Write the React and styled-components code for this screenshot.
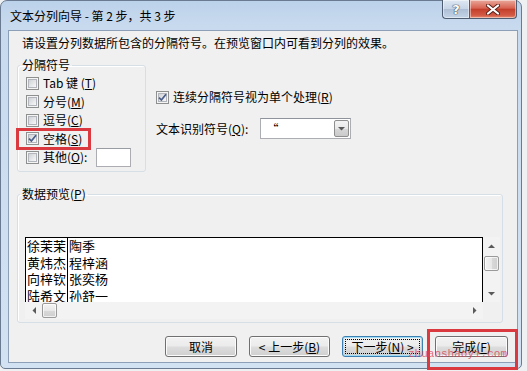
import React from "react";
import styled, { createGlobalStyle } from "styled-components";

const Global = createGlobalStyle`
  html, body { margin: 0; padding: 0; background: #eef0f2; }
  body {
    width: 527px; height: 371px; overflow: hidden;
    font-family: "Noto Sans CJK SC", "Noto Sans", sans-serif;
    font-size: 12px; color: #000;
  }
  u { text-decoration: underline; text-underline-offset: 1px; }
`;

const Window = styled.div`
  position: relative;
  width: 522px;
  height: 369px;
  box-sizing: border-box;
  border: 1px solid #6a7a90;
  border-radius: 7px 7px 5px 5px;
  background: linear-gradient(180deg, #bcd2ea 0px, #c8daee 26px, #d2e2f3 100%);
  display: flex;
  flex-direction: column;
`;

const TitleBar = styled.div`
  height: 29px;
  display: flex;
  align-items: flex-start;
  flex: none;
`;

const Title = styled.div`
  padding-left: 9px;
  line-height: 29px;
  font-size: 12px;
  color: #000;
`;

const Captions = styled.div`
  margin-left: auto;
  margin-right: 4px;
  margin-top: -1px;
  display: flex;
`;

const CapBtn = styled.div`
  height: 19px;
  box-sizing: border-box;
  border: 1px solid #4f5d72;
  border-top: none;
  display: flex;
  align-items: center;
  justify-content: center;
  box-shadow: inset 0 0 0 1px rgba(255,255,255,0.45);
`;

const HelpBtn = styled(CapBtn)`
  width: 27px;
  border-right: none;
  border-radius: 0 0 0 4px;
  background: linear-gradient(180deg, #dfe8f3 0%, #c7d5e6 48%, #aebfd5 52%, #c4d4e8 100%);
  color: #fff;
  font-family: "DejaVu Sans", sans-serif;
  font-weight: bold;
  font-size: 13px;
  text-shadow: 0 0 1px #3b4658, 0 0 1px #3b4658, 0 0 1px #3b4658;
`;

const CloseBtn = styled(CapBtn)`
  width: 48px;
  border-radius: 0 0 4px 0;
  background: linear-gradient(180deg, #e9a99b 0%, #d86352 45%, #c33f2c 52%, #d45a45 85%, #e48a6e 100%);
`;

const Client = styled.div`
  position: relative;
  flex: 1;
  margin: 0 3px 5px 7px;
  border: 1px solid #8d9fb6;
  background: #f0f0f0;
  padding: 3px 9px 0 8px;
  display: flex;
  flex-direction: column;
`;

const Instruction = styled.div`
  line-height: 18px;
  padding-left: 5px;
`;

const TopSection = styled.div`
  display: flex;
  margin-top: 5px;
`;

const Group = styled.fieldset`
  margin: ${(p) => p.$mt || 0}px 0 0 0;
  padding: 0;
  min-width: 0;
  width: ${(p) => p.$w}px;
  height: ${(p) => p.$h}px;
  box-sizing: border-box;
  border: 1px solid #d5dfe5;
  border-radius: 3px;
  box-shadow: inset 1px 1px 0 #fff;
  flex: none;
`;

const Legend = styled.legend`
  margin-left: 2px;
  padding: 0 2px;
  line-height: 16px;
  font-size: 12px;
`;

const Options = styled.div`
  padding: 1px 0 0 8px;
  display: flex;
  flex-direction: column;
`;

const OptRow = styled.div`
  position: relative;
  height: 18.5px;
  display: flex;
  align-items: center;
  gap: 4px;
  align-self: flex-start;
  &::after {
    content: "";
    display: ${(p) => (p.$highlight ? "block" : "none")};
    position: absolute;
    left: -10px;
    top: -2px;
    width: 75px;
    height: 22px;
    box-sizing: border-box;
    border: 3px solid #d9393f;
  }
`;

const Label = styled.span`
  line-height: 16px;
  white-space: nowrap;
`;

const BoxOuter = styled.span`
  width: 13px;
  height: 13px;
  box-sizing: border-box;
  border: 1px solid #8e8f8f;
  background: #f4f4f4;
  padding: 1px;
  flex: none;
  display: flex;
`;

const BoxInner = styled.span`
  flex: 1;
  border: 1px solid #b2b6bc;
  background: linear-gradient(135deg, #cfd2d6 0%, #e6e7e9 55%, #f8f8f8 100%);
  display: flex;
  align-items: center;
  justify-content: center;
`;

const CheckBox = ({ checked }) => (
  <BoxOuter>
    <BoxInner>
      {checked && (
        <svg width="9" height="9" viewBox="0 0 9 9" style={{ margin: -2 }}>
          <path d="M1 4.6 L3.4 7 L8 1.2" fill="none" stroke="#4a5e8b" strokeWidth="1.7" />
        </svg>
      )}
    </BoxInner>
  </BoxOuter>
);

const OtherInput = styled.span`
  width: 35px;
  height: 19px;
  box-sizing: border-box;
  border: 1px solid #abadb3;
  border-top-color: #999ca3;
  background: #fff;
  margin-left: 5px;
`;

const RightCol = styled.div`
  margin-left: 10px;
  padding-top: 31px;
  display: flex;
  flex-direction: column;
`;

const ComboRow = styled.div`
  margin-top: 11.5px;
  display: flex;
  align-items: center;
  gap: 12px;
`;

const Combo = styled.div`
  width: 91px;
  height: 21px;
  box-sizing: border-box;
  border: 1px solid #abadb3;
  border-top-color: #8f939b;
  background: #fff;
  display: flex;
  align-items: stretch;
  padding: 1px;
`;

const ComboText = styled.span`
  flex: 1;
  padding-left: 4px;
  line-height: 17px;
  font-size: 12px;
`;

const ComboBtn = styled.span`
  width: 15px;
  box-sizing: border-box;
  border: 1px solid #8f8f8f;
  border-radius: 2px;
  background: linear-gradient(180deg, #f4f4f4 0%, #e8e8e8 50%, #d8d8d8 51%, #cacaca 100%);
  display: flex;
  align-items: center;
  justify-content: center;
`;

const PreviewBody = styled.div`
  padding: 35px 0 0 7px;
`;

const ListCtl = styled.div`
  display: grid;
  grid-template-columns: 458px 17px;
  grid-template-rows: 65px 17px;
  width: 475px;
`;

const DataArea = styled.div`
  background: #fff;
  border-top: 1px solid #000;
  border-right: 1px solid #000;
  display: flex;
  overflow: hidden;
`;

const DataCol = styled.div`
  border-left: 1px solid #000;
  width: ${(p) => (p.$w ? `${p.$w}px` : "auto")};
  flex: ${(p) => (p.$w ? "none" : "1")};
  box-sizing: border-box;
  padding-left: 1px;
`;

const Cell = styled.div`
  font-size: 13px;
  line-height: 16.5px;
  white-space: nowrap;
`;

const ScrollTrack = styled.div`
  background: #f3f3f3;
  display: flex;
  flex-direction: ${(p) => (p.$vertical ? "column" : "row")};
  align-items: center;
`;

const ArrowBox = styled.div`
  width: 17px;
  height: 17px;
  flex: none;
  display: flex;
  align-items: center;
  justify-content: center;
  margin-${(p) => (p.$end ? (p.$vertical ? "top" : "left") : "none")}: auto;
`;

const Thumb = styled.div`
  width: 15px;
  height: 15px;
  box-sizing: border-box;
  border: 1px solid #9a9a9a;
  border-radius: 2px;
  background: linear-gradient(${(p) => (p.$vertical ? "90deg" : "180deg")}, #f4f4f4 0%, #e8e8e8 50%, #d9d9d9 51%, #cfcfcf 100%);
  box-shadow: inset 0 0 0 1px rgba(255,255,255,0.7);
  flex: none;
  margin-${(p) => (p.$vertical ? "top" : "left")}: ${(p) => (p.$vertical ? 2 : 0)}px;
`;

const Corner = styled.div`
  background: #f0f0f0;
`;

const Arrow = ({ dir }) => {
  const paths = {
    up: "M0 4 L3.5 0.5 L7 4 Z",
    down: "M0 0 L7 0 L3.5 3.5 Z",
    left: "M4 0 L4 7 L0.5 3.5 Z",
    right: "M0 0 L3.5 3.5 L0 7 Z",
  };
  const vert = dir === "up" || dir === "down";
  return (
    <svg width={vert ? 7 : 4} height={vert ? 4 : 7} viewBox={vert ? "0 0 7 4" : "0 0 4 7"}>
      <path d={paths[dir]} fill="#5a5a5a" />
    </svg>
  );
};

const ButtonRow = styled.div`
  margin-top: 13px;
  display: flex;
  justify-content: flex-end;
  gap: 12px;
`;

const Button = styled.div`
  position: relative;
  width: ${(p) => p.$w}px;
  height: 21px;
  box-sizing: border-box;
  border: 1px solid ${(p) => (p.$default ? "#3c7fb1" : "#707070")};
  border-radius: 3px;
  background: linear-gradient(180deg, #f2f2f2 0%, #ebebeb 48%, #dddddd 52%, #cfcfcf 100%);
  box-shadow: inset 0 0 0 1px ${(p) => (p.$default ? "#9fdcf6" : "#fbfbfb")};
  display: flex;
  align-items: center;
  justify-content: center;
  font-size: 12px;
  line-height: 16px;
  white-space: pre;
  outline: ${(p) => (p.$default ? "1px dotted #000" : "none")};
  outline-offset: -4px;
  &::after {
    content: "";
    display: ${(p) => (p.$highlight ? "block" : "none")};
    position: absolute;
    left: -9px;
    top: -8px;
    width: 91px;
    height: 41px;
    box-sizing: border-box;
    border: 3px solid #d9393f;
  }
`;

const Watermark = styled.div`
  position: absolute;
  left: 399px;
  top: 317px;
  font-family: "Liberation Mono", monospace;
  font-size: 11px;
  line-height: 12px;
  color: rgba(220, 70, 90, 0.8);
  pointer-events: none;
`;

export default function App() {
  return (
    <>
      <Global />
      <Window>
        <TitleBar>
          <Title>文本分列向导 - 第 2 步，共 3 步</Title>
          <Captions>
            <HelpBtn>?</HelpBtn>
            <CloseBtn>
              <svg width="14" height="11" viewBox="0 0 14 11">
                <path d="M2 1.5 L12 9.5 M12 1.5 L2 9.5" stroke="#5a2018" strokeWidth="4" strokeLinecap="round" />
                <path d="M2 1.5 L12 9.5 M12 1.5 L2 9.5" stroke="#fff" strokeWidth="2.2" strokeLinecap="round" />
              </svg>
            </CloseBtn>
          </Captions>
        </TitleBar>
        <Client>
          <Instruction>请设置分列数据所包含的分隔符号。在预览窗口内可看到分列的效果。</Instruction>
          <TopSection>
            <Group $w={129} $h={115}>
              <Legend>分隔符号</Legend>
              <Options>
                <OptRow>
                  <CheckBox />
                  <Label>Tab 键 (<u>T</u>)</Label>
                </OptRow>
                <OptRow>
                  <CheckBox />
                  <Label>分号(<u>M</u>)</Label>
                </OptRow>
                <OptRow>
                  <CheckBox />
                  <Label>逗号(<u>C</u>)</Label>
                </OptRow>
                <OptRow $highlight>
                  <CheckBox checked />
                  <Label>空格(<u>S</u>)</Label>
                </OptRow>
                <OptRow>
                  <CheckBox />
                  <Label>其他(<u>O</u>):</Label>
                  <OtherInput />
                </OptRow>
              </Options>
            </Group>
            <RightCol>
              <OptRow>
                <CheckBox checked />
                <Label>连续分隔符号视为单个处理(<u>R</u>)</Label>
              </OptRow>
              <ComboRow>
                <Label>文本识别符号(<u>Q</u>):</Label>
                <Combo>
                  <ComboText>“</ComboText>
                  <ComboBtn>
                    <Arrow dir="down" />
                  </ComboBtn>
                </Combo>
              </ComboRow>
            </RightCol>
          </TopSection>
          <Group $w={486} $h={137} $mt={14}>
            <Legend>数据预览(<u>P</u>)</Legend>
            <PreviewBody>
              <ListCtl>
                <DataArea>
                  <DataCol $w={42}>
                    <Cell>徐茉茉</Cell>
                    <Cell>黄炜杰</Cell>
                    <Cell>向梓钦</Cell>
                    <Cell>陆希文</Cell>
                  </DataCol>
                  <DataCol>
                    <Cell>陶季</Cell>
                    <Cell>程梓涵</Cell>
                    <Cell>张奕杨</Cell>
                    <Cell>孙舒一</Cell>
                  </DataCol>
                </DataArea>
                <ScrollTrack $vertical>
                  <ArrowBox>
                    <Arrow dir="up" />
                  </ArrowBox>
                  <Thumb $vertical />
                  <ArrowBox $end $vertical>
                    <Arrow dir="down" />
                  </ArrowBox>
                </ScrollTrack>
                <ScrollTrack>
                  <ArrowBox>
                    <Arrow dir="left" />
                  </ArrowBox>
                  <Thumb />
                  <ArrowBox $end>
                    <Arrow dir="right" />
                  </ArrowBox>
                </ScrollTrack>
                <Corner />
              </ListCtl>
            </PreviewBody>
          </Group>
          <ButtonRow>
            <Button $w={72}>取消</Button>
            <Button $w={81}>{"< 上一步("}<u>B</u>)</Button>
            <Button $w={81} $default>下一步(<u>N</u>){" >"}</Button>
            <Button $w={73} $highlight>完成(<u>F</u>)</Button>
          </ButtonRow>
          <Watermark>zhuanshaoyi.com</Watermark>
        </Client>
      </Window>
    </>
  );
}
